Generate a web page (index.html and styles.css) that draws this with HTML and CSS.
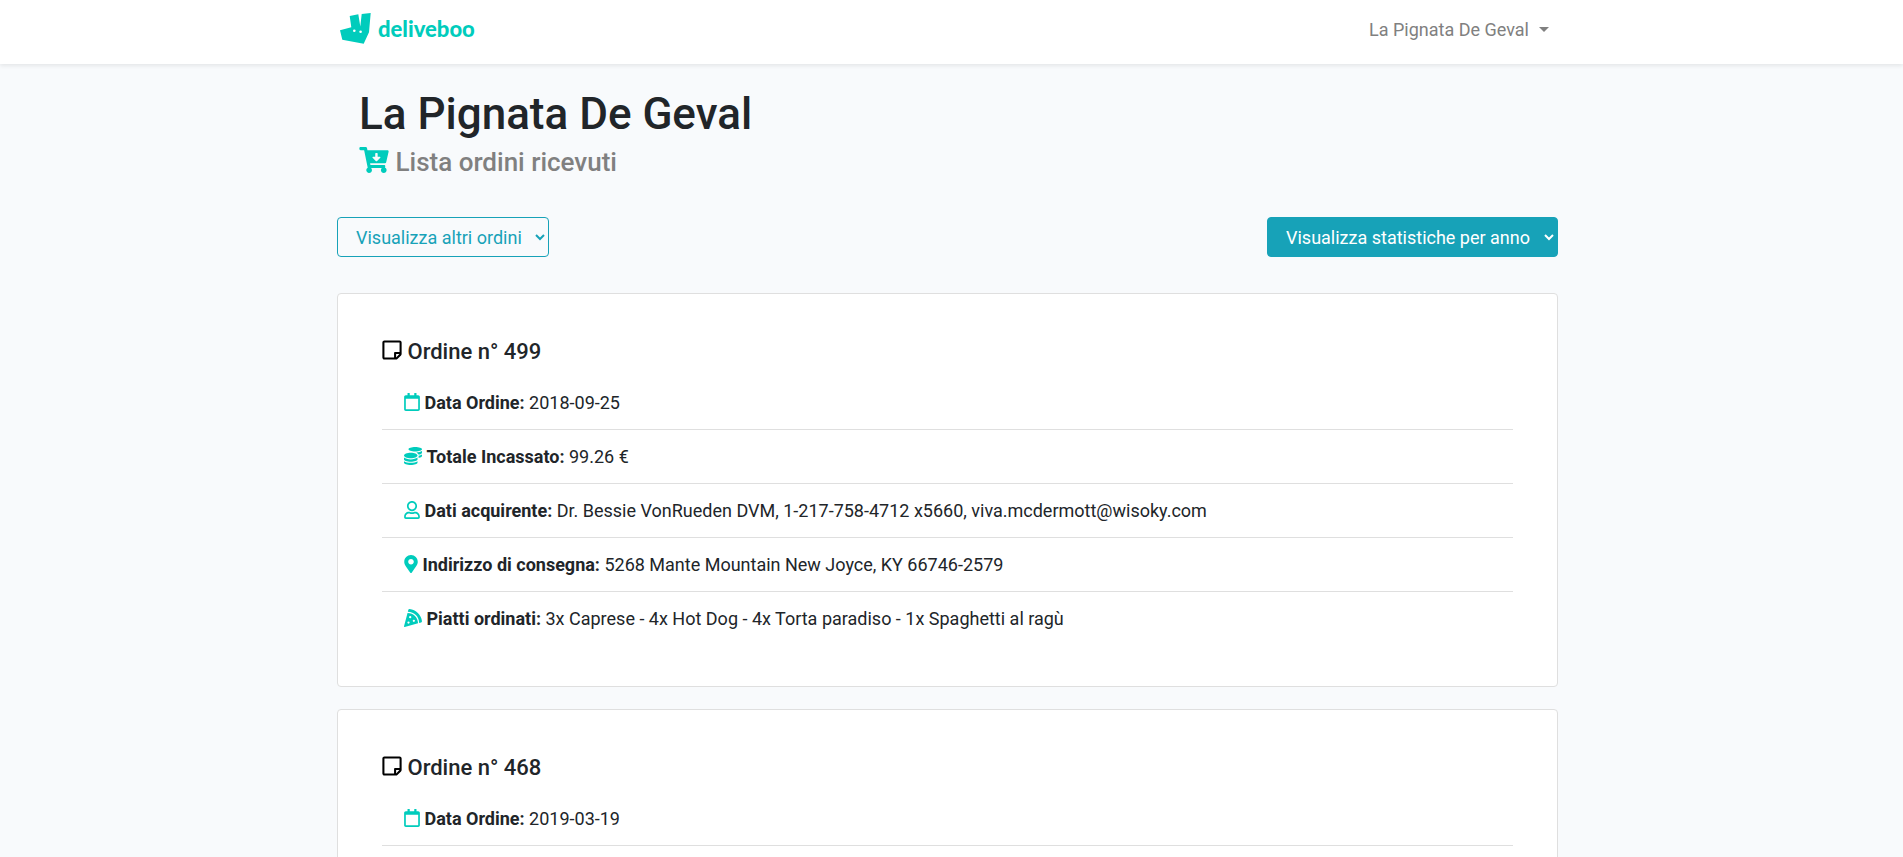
FILE: index.html
```html
<!DOCTYPE html>
<html lang="it">
<head>
<meta charset="utf-8">
<title>Deliveboo</title>
<link rel="stylesheet" href="styles.css">
</head>
<body>
<svg class="sprite" aria-hidden="true">
  <symbol id="note" viewBox="0 0 448 512"><path d="M448 348.106V80c0-26.51-21.49-48-48-48H48C21.490 32 0 53.490 0 80v351.988c0 26.510 21.490 48 48 48h268.118a48 48 0 0 0 33.941-14.059l83.882-83.882A48 48 0 0 0 448 348.106zm-128 80.005v-76.118h76.118L320 428.111zM400 80v223.988H296c-13.255 0-24 10.745-24 24v104H48V80h352z"/></symbol>
  <symbol id="calendar" viewBox="0 0 448 512"><path d="M400 64h-48V12c0-6.600-5.400-12-12-12h-40c-6.600 0-12 5.400-12 12v52H160V12c0-6.600-5.400-12-12-12h-40c-6.600 0-12 5.400-12 12v52H48C21.500 64 0 85.500 0 112v352c0 26.500 21.500 48 48 48h352c26.500 0 48-21.500 48-48V112c0-26.500-21.500-48-48-48zm-6 400H54c-3.300 0-6-2.700-6-6V160h352v298c0 3.300-2.700 6-6 6z"/></symbol>
  <symbol id="coins" viewBox="0 0 512 512"><path d="M0 405.300V448c0 35.300 86 64 192 64s192-28.700 192-64v-42.700C342.700 434.400 267.200 448 192 448S41.300 434.400 0 405.300zM320 128c106 0 192-28.700 192-64S426 0 320 0 128 28.700 128 64s86 64 192 64zM0 300.400V352c0 35.300 86 64 192 64s192-28.700 192-64v-51.600c-41.300 34-116.900 51.600-192 51.600S41.300 334.400 0 300.400zm416 11c57.300-11.100 96-31.700 96-55.400v-42.700c-23.200 16.400-57.300 27.600-96 34.500v63.600zM192 160C86 160 0 195.800 0 240s86 80 192 80 192-35.800 192-80-86-80-192-80zm219.300 56.300c60-10.800 100.700-32 100.700-56.300v-42.700c-35.500 25.100-96.500 38.600-160.700 41.800 29.500 14.300 51.200 33.500 60 57.200z"/></symbol>
  <symbol id="user" viewBox="0 0 448 512"><path d="M313.600 304c-28.700 0-42.500 16-89.600 16-47.100 0-60.800-16-89.600-16C60.200 304 0 364.200 0 438.400V464c0 26.500 21.500 48 48 48h352c26.500 0 48-21.500 48-48v-25.600c0-74.200-60.200-134.400-134.400-134.400zM400 464H48v-25.600c0-47.600 38.800-86.400 86.400-86.400 14.600 0 38.300 16 89.600 16 51.700 0 74.900-16 89.600-16 47.600 0 86.400 38.800 86.400 86.400V464zM224 288c79.500 0 144-64.500 144-144S303.500 0 224 0 80 64.500 80 144s64.500 144 144 144zm0-240c52.900 0 96 43.100 96 96s-43.100 96-96 96-96-43.100-96-96 43.100-96 96-96z"/></symbol>
  <symbol id="marker" viewBox="0 0 384 512"><path d="M172.268 501.670C26.970 291.031 0 269.413 0 192 0 85.961 85.961 0 192 0s192 85.961 192 192c0 77.413-26.970 99.031-172.268 309.670-9.535 13.774-29.930 13.773-39.464 0zM192 272c44.183 0 80-35.817 80-80s-35.817-80-80-80-80 35.817-80 80 35.817 80 80 80z"/></symbol>
  <symbol id="pizza" viewBox="0 0 512 512"><path d="M158.870.150c-16.160-1.520-31.200 8.420-35.330 24.120l-14.810 56.270c187.620 5.490 314.540 130.610 322.480 317l56.940-15.780c15.720-4.360 25.490-19.680 23.620-35.900C490.890 165.080 340.780 17.320 158.870.150zm-58.470 112L.550 491.640a16.210 16.210 0 0 0 20 19.750l379-105.100c-4.270-174.890-123.080-292.140-299.150-294.100zM128 416a32 32 0 1 1 32-32 32 32 0 0 1-32 32zm48-152a32 32 0 1 1 32-32 32 32 0 0 1-32 32zm104 104a32 32 0 1 1 32-32 32 32 0 0 1-32 32z"/></symbol>
  <symbol id="cart" viewBox="0 0 576 512"><path d="M504.717 320H211.572l6.545 32h268.418c15.401 0 26.816 14.301 23.403 29.319l-5.517 24.276C523.112 414.668 536 433.828 536 456c0 31.202-25.519 56.444-56.824 55.994-29.823-.429-54.350-24.631-55.155-54.447-.440-16.287 6.085-31.049 16.803-41.548H231.176C241.553 426.165 248 440.326 248 456c0 31.813-26.528 57.431-58.670 55.938-28.540-1.325-51.751-24.385-53.251-52.917-1.158-22.034 10.436-41.455 28.051-51.586L93.883 64H24C10.745 64 0 53.255 0 40V24C0 10.745 10.745 0 24 0h102.529c11.401 0 21.228 8.021 23.513 19.190L159.208 64H551.990c15.401 0 26.816 14.301 23.403 29.319l-47.273 208C525.637 312.246 515.923 320 504.717 320zM403.029 192H360v-60c0-6.627-5.373-12-12-12h-24c-6.627 0-12 5.373-12 12v60h-43.029c-10.691 0-16.045 12.926-8.485 20.485l67.029 67.029c4.686 4.686 12.284 4.686 16.971 0l67.029-67.029c7.559-7.559 2.205-20.485-8.486-20.485z"/></symbol>
</svg>

<nav class="navbar">
  <div class="container navbar-inner">
    <a class="brand" href="#">
      <svg class="brand-mark" viewBox="0 0 31 31" aria-hidden="true"><path d="M0 17.300 11.300 14.300 9.700 3 18.300 1.300 20.300 13.500 21.700 1 30.700 0 29 19.300 23.700 30.700 2.300 26.700z"/><circle class="eye" cx="14.300" cy="17.700" r="1.300"/><circle class="eye" cx="20.600" cy="18.700" r="1.300"/></svg>
      <span>deliveboo</span>
    </a>
    <button class="user-menu" type="button">La Pignata De Geval<span class="caret"></span></button>
  </div>
</nav>

<main class="page">
  <div class="container">
    <header class="page-header">
      <h1>La Pignata De Geval</h1>
      <h2><svg class="icon icon-cart"><use href="#cart"/></svg> Lista ordini ricevuti</h2>
    </header>

    <div class="filters">
      <select class="select select-outline" aria-label="Visualizza altri ordini"><option>Visualizza altri ordini</option></select>
      <select class="select select-solid" aria-label="Visualizza statistiche per anno"><option>Visualizza statistiche per anno</option></select>
    </div>

    <article class="card">
      <h3><svg class="icon icon-note"><use href="#note"/></svg> Ordine n° 499</h3>
      <ul class="details">
        <li><svg class="icon icon-regular"><use href="#calendar"/></svg> <strong>Data Ordine:</strong> 2018-09-25</li>
        <li><svg class="icon icon-wide"><use href="#coins"/></svg> <strong>Totale Incassato:</strong> 99.26 €</li>
        <li><svg class="icon icon-regular"><use href="#user"/></svg> <strong>Dati acquirente:</strong> Dr. Bessie VonRueden DVM, 1-217-758-4712 x5660, viva.mcdermott@wisoky.com</li>
        <li><svg class="icon icon-narrow"><use href="#marker"/></svg> <strong>Indirizzo di consegna:</strong> 5268 Mante Mountain New Joyce, KY 66746-2579</li>
        <li><svg class="icon icon-wide"><use href="#pizza"/></svg> <strong>Piatti ordinati:</strong> 3x Caprese - 4x Hot Dog - 4x Torta paradiso - 1x Spaghetti al ragù</li>
      </ul>
    </article>

    <article class="card">
      <h3><svg class="icon icon-note"><use href="#note"/></svg> Ordine n° 468</h3>
      <ul class="details">
        <li><svg class="icon icon-regular"><use href="#calendar"/></svg> <strong>Data Ordine:</strong> 2019-03-19</li>
        <li><svg class="icon icon-wide"><use href="#coins"/></svg></li>
      </ul>
    </article>
  </div>
</main>
</body>
</html>
```
FILE: styles.css
```css
* { box-sizing: border-box; }

html { overflow: hidden; }

body {
  margin: 0;
  background: #f8fafc;
  color: #212529;
  font-family: Roboto, "Liberation Sans", sans-serif;
  font-size: 18px;
  line-height: 27px;
}

.sprite { display: none; }

.navbar, .page { padding-right: 8px; }

.container {
  width: 100%;
  max-width: 1253px;
  margin: 0 auto;
  padding: 0 16px;
}

.navbar {
  height: 64px;
  background: #fff;
  box-shadow: 0 2px 4px rgba(0, 0, 0, 0.08);
}

.navbar-inner {
  display: flex;
  align-items: center;
  justify-content: space-between;
  height: 58px;
}

.brand {
  display: flex;
  align-items: center;
  gap: 7px;
  padding: 0 3px 2px;
  color: #00ccbc;
  font-family: Lato, sans-serif;
  font-size: 22px;
  font-weight: 900;
  text-decoration: none;
}

.brand-mark { width: 31px; height: 31px; fill: #00ccbc; }
.brand-mark .eye { fill: #fff; }

.user-menu {
  display: flex;
  align-items: center;
  padding: 0 9px;
  border: 0;
  background: none;
  color: #808080;
  font: inherit;
}

.caret {
  margin-left: 10px;
  border-top: 5px solid;
  border-right: 5px solid transparent;
  border-left: 5px solid transparent;
}

.page-header { padding: 24px 22px 0; }

h1, h2, h3 { margin: 0; font-weight: 500; }
h1 { font-size: 44px; line-height: 53px; }
h2 { padding-top: 5px; color: #808080; font-size: 26px; line-height: 32px; }
h3 { margin-bottom: 11px; font-size: 22px; line-height: 26px; }

.filters {
  display: flex;
  justify-content: space-between;
  margin: 39px 0 36px;
}

.select {
  height: 40px;
  padding: 0 10px 0 14px;
  border: 1px solid #17a2b8;
  border-radius: 4px;
  font: inherit;
}

.select-outline { background: transparent; color: #17a2b8; }
.select-solid { background: #17a2b8; color: #fff; }

.card {
  margin-bottom: 22px;
  padding: 45px 44px 41px;
  border: 1px solid #dfdfdf;
  border-radius: 4px;
  background: #fff;
}

.details { margin: 0; padding: 0; list-style: none; }
.details li { padding: 13px 22px; border-bottom: 1px solid #dfdfdf; }
.details li:last-child { border-bottom: 0; }

.icon { fill: #00ccbc; vertical-align: -2px; }
.icon-cart { width: 30px; height: 26px; }
.icon-note { width: 20px; height: 22px; fill: #000; }
.icon-regular { width: 16px; height: 18px; }
.icon-wide { width: 18px; height: 18px; }
.icon-narrow { width: 14px; height: 18px; }
```
